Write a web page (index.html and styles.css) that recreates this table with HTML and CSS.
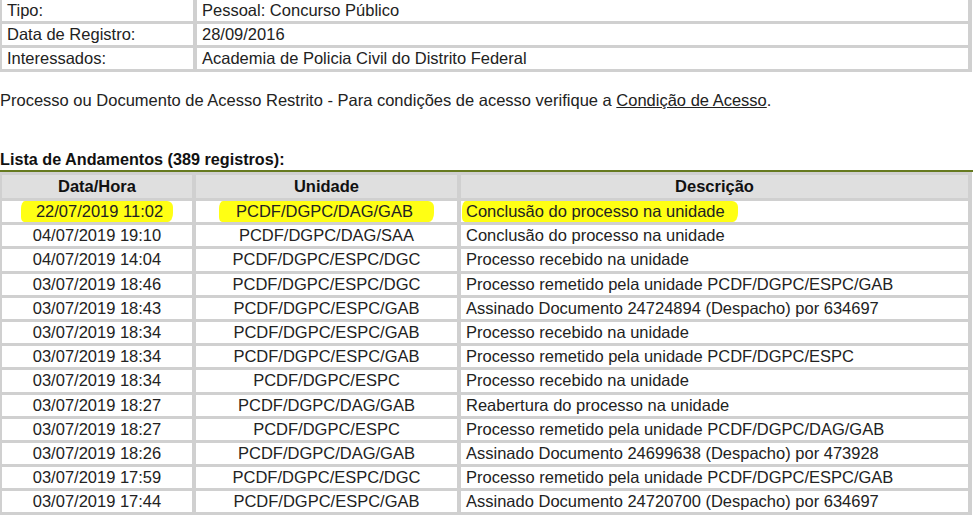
FILE: index.html
```html
<!DOCTYPE html>
<html lang="pt-BR">
<head>
<meta charset="utf-8">
<title>Processo</title>
<link rel="stylesheet" href="styles.css">
</head>
<body>
<table class="info">
  <colgroup><col class="info-k"><col class="info-v"></colgroup>
  <tr><td>Tipo:</td><td>Pessoal: Concurso Público</td></tr>
  <tr><td>Data de Registro:</td><td>28/09/2016</td></tr>
  <tr><td>Interessados:</td><td>Academia de Policia Civil do Distrito Federal</td></tr>
</table>

<p class="notice">Processo ou Documento de Acesso Restrito - Para condições de acesso verifique a <a class="link" href="#">Condição de Acesso</a>.</p>

<div class="caption">Lista de Andamentos (389 registros):</div>
<table class="andamentos">
  <colgroup><col class="c-data"><col class="c-unid"><col class="c-desc"></colgroup>
  <thead>
    <tr><th>Data/Hora</th><th>Unidade</th><th>Descrição</th></tr>
  </thead>
  <tbody>
    <tr class="hl-row">
      <td class="ctr"><span class="mark mark-a">22/07/2019 11:02</span></td>
      <td class="ctr"><span class="mark mark-b">PCDF/DGPC/DAG/GAB</span></td>
      <td><span class="mark mark-c">Conclusão do processo na unidade</span></td>
    </tr>
    <tr><td class="ctr">04/07/2019 19:10</td><td class="ctr">PCDF/DGPC/DAG/SAA</td><td>Conclusão do processo na unidade</td></tr>
    <tr><td class="ctr">04/07/2019 14:04</td><td class="ctr">PCDF/DGPC/ESPC/DGC</td><td>Processo recebido na unidade</td></tr>
    <tr><td class="ctr">03/07/2019 18:46</td><td class="ctr">PCDF/DGPC/ESPC/DGC</td><td>Processo remetido pela unidade PCDF/DGPC/ESPC/GAB</td></tr>
    <tr><td class="ctr">03/07/2019 18:43</td><td class="ctr">PCDF/DGPC/ESPC/GAB</td><td>Assinado Documento 24724894 (Despacho) por 634697</td></tr>
    <tr><td class="ctr">03/07/2019 18:34</td><td class="ctr">PCDF/DGPC/ESPC/GAB</td><td>Processo recebido na unidade</td></tr>
    <tr><td class="ctr">03/07/2019 18:34</td><td class="ctr">PCDF/DGPC/ESPC/GAB</td><td>Processo remetido pela unidade PCDF/DGPC/ESPC</td></tr>
    <tr><td class="ctr">03/07/2019 18:34</td><td class="ctr">PCDF/DGPC/ESPC</td><td>Processo recebido na unidade</td></tr>
    <tr><td class="ctr">03/07/2019 18:27</td><td class="ctr">PCDF/DGPC/DAG/GAB</td><td>Reabertura do processo na unidade</td></tr>
    <tr><td class="ctr">03/07/2019 18:27</td><td class="ctr">PCDF/DGPC/ESPC</td><td>Processo remetido pela unidade PCDF/DGPC/DAG/GAB</td></tr>
    <tr><td class="ctr">03/07/2019 18:26</td><td class="ctr">PCDF/DGPC/DAG/GAB</td><td>Assinado Documento 24699638 (Despacho) por 473928</td></tr>
    <tr><td class="ctr">03/07/2019 17:59</td><td class="ctr">PCDF/DGPC/ESPC/DGC</td><td>Processo remetido pela unidade PCDF/DGPC/ESPC/GAB</td></tr>
    <tr><td class="ctr">03/07/2019 17:44</td><td class="ctr">PCDF/DGPC/ESPC/GAB</td><td>Assinado Documento 24720700 (Despacho) por 634697</td></tr>
  </tbody>
</table>
</body>
</html>
```

FILE: styles.css
```css
html, body {
  margin: 0;
  padding: 0;
  background: #ffffff;
  overflow: hidden;
}

body {
  font-family: "Liberation Sans", Arial, sans-serif;
  color: #222222;
  font-size: 16.5px;
}

table {
  border-collapse: separate;
  table-layout: fixed;
  background: #d0d0d0;
  margin-left: -2px;
}

td, th {
  padding: 0 5px;
  height: 21px;
  line-height: 19px;
  white-space: nowrap;
  overflow: hidden;
  box-sizing: border-box;
}

/* top info table */
.info {
  width: 974px;
  border-spacing: 4px 3px;
  margin-top: -3px;
}
.info-k { width: 191px; }
.info-v { width: 771px; }
.info td {
  background: #ffffff;
  font-size: 16.5px;
}

.notice {
  margin: 19px 0 0 0;
  font-size: 16.5px;
  line-height: 19px;
}

.link {
  color: inherit;
  text-decoration: underline;
}

.caption {
  margin-top: 40px;
  font-weight: bold;
  font-size: 16.2px;
  line-height: 18px;
  color: #111111;
  padding-bottom: 2px;
  border-bottom: 2px solid #667a20;
}

/* andamentos */
.andamentos {
  width: 974px;
  border-spacing: 4px 3px;
  font-size: 16.5px;
}
.c-data { width: 190px; }
.c-unid { width: 261px; }
.c-desc { width: 507px; }

.andamentos th {
  background: #dfdfdf;
  font-weight: bold;
  color: #111111;
  height: 23px;
  font-size: 16.5px;
  text-align: center;
}

.andamentos td {
  background: #ffffff;
  height: 21.2px;
  padding: 0 5px;
}
.andamentos td.ctr { text-align: center; }

.mark {
  display: inline-block;
  background: #ffff14;
  border-radius: 4px 6px 5px 3px / 8px 6px 9px 5px;
  line-height: 21px;
}
.mark-a { padding: 0 10px 0 15px; }
.mark-b { padding: 0 21px 0 17px; }
.mark-c { padding: 0 13px 0 4px; margin-left: -4px; }
```
